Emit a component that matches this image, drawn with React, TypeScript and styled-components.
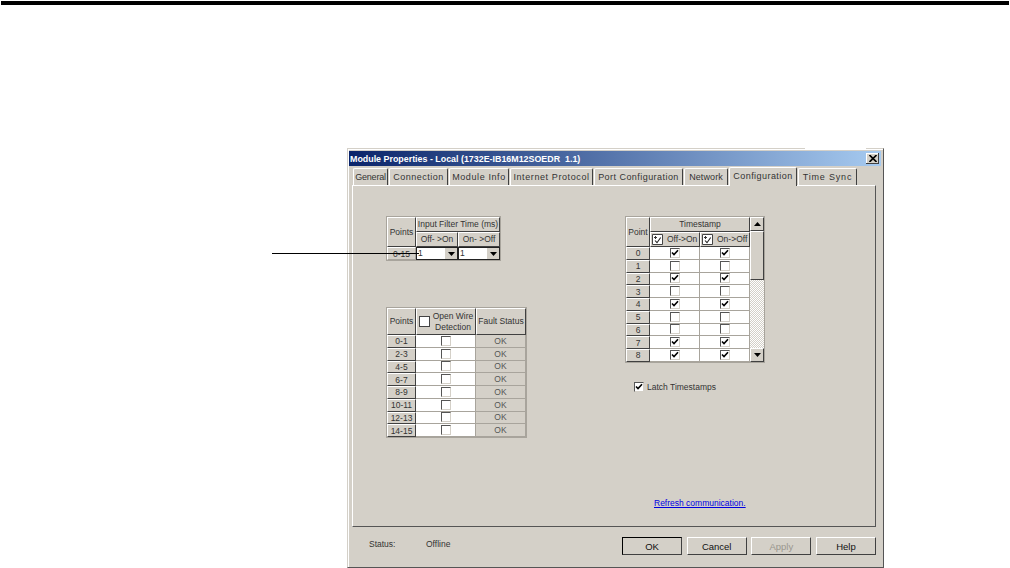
import React from 'react';
import styled, { createGlobalStyle } from 'styled-components';

const GlobalStyle = createGlobalStyle`
  html, body {
    margin: 0;
    padding: 0;
    background: #fff;
  }
  body {
    font-family: "Liberation Sans", Arial, sans-serif;
    overflow: hidden;
  }
`;

const TABS = [
  { label: 'General', width: 35, spacing: -0.2 },
  { label: 'Connection', width: 59, spacing: 0.5 },
  { label: 'Module Info', width: 60, spacing: 0.6 },
  { label: 'Internet Protocol', width: 83, spacing: 0.6 },
  { label: 'Port Configuration', width: 89, spacing: 0.45 },
  { label: 'Network', width: 44, spacing: 0.1 },
  { label: 'Configuration', width: 68, spacing: 0.45 },
  { label: 'Time Sync', width: 59, spacing: 0.8 },
];

const WIRE_POINTS = ['0-1', '2-3', '4-5', '6-7', '8-9', '10-11', '12-13', '14-15'];

const STAMP_ROWS = [
  { point: '0', on: true },
  { point: '1', on: false },
  { point: '2', on: true },
  { point: '3', on: false },
  { point: '4', on: true },
  { point: '5', on: false },
  { point: '6', on: false },
  { point: '7', on: true },
  { point: '8', on: true },
];

const CheckBox = ({ checked = false }: { checked?: boolean }) => (
  <Box>
    {checked && (
      <svg width="8" height="8" viewBox="0 0 8 8">
        <path d="M1 3.5 L3 5.6 L7 1.2" fill="none" stroke="#000" strokeWidth="1.6" />
      </svg>
    )}
  </Box>
);

const HeaderCheck = () => (
  <HeaderIcon width="11" height="11" viewBox="0 0 11 11">
    <path d="M0.5 10.5 V0.5 H10.5 V10.5 Z" fill="#fff" stroke="#444" />
    <path d="M2 3.5 H5 M3.5 2 V5" stroke="#333" />
    <path d="M3 6.5 L5 8.7 L8.7 3.5" fill="none" stroke="#222" strokeWidth="1.1" />
  </HeaderIcon>
);

const Arrow = ({ dir }: { dir: 'up' | 'down' }) => (
  <svg width="7" height="4" viewBox="0 0 7 4">
    <path d={dir === 'up' ? 'M3.5 0 L7 4 H0 Z' : 'M0 0 H7 L3.5 4 Z'} fill="#000" />
  </svg>
);

const Combo = () => (
  <ComboCell>
    <ComboValue>1</ComboValue>
    <ComboButton>
      <Arrow dir="down" />
    </ComboButton>
  </ComboCell>
);

export default function App() {
  return (
    <Page>
      <GlobalStyle />
      <TopRule />
      <Leader />
      <Dialog>
        <BorderGap />
        <TitleBar>
          <TitleText>Module Properties - Local (1732E-IB16M12SOEDR&nbsp;&nbsp;1.1)</TitleText>
          <CloseButton>
            <svg width="8" height="7" viewBox="0 0 8 7">
              <path d="M0.5 0 L7.5 7 M7.5 0 L0.5 7" stroke="#000" strokeWidth="1.6" />
            </svg>
          </CloseButton>
        </TitleBar>

        <TabStrip>
          {TABS.map((t) => (
            <Tab key={t.label} $width={t.width} $spacing={t.spacing} $active={t.label === 'Configuration'}>
              {t.label}
            </Tab>
          ))}
        </TabStrip>

        <Panel>
          <LeftColumn>
            <FilterGrid>
              <HeadCell $rows={2}>Points</HeadCell>
              <HeadCell $cols={2}>Input Filter Time (ms)</HeadCell>
              <HeadCell>Off- &gt;On</HeadCell>
              <HeadCell>On- &gt;Off</HeadCell>
              <RowHead $flat>0-15</RowHead>
              <Combo />
              <Combo />
            </FilterGrid>

            <WireGrid>
              <HeadCell>Points</HeadCell>
              <HeadCell>
                <HeadBox />
                <WireLabel>
                  Open Wire
                  <br />
                  Detection
                </WireLabel>
              </HeadCell>
              <HeadCell>Fault Status</HeadCell>
              {WIRE_POINTS.map((p) => (
                <React.Fragment key={p}>
                  <RowHead>{p}</RowHead>
                  <DataCell>
                    <CheckBox />
                  </DataCell>
                  <StatusCell>OK</StatusCell>
                </React.Fragment>
              ))}
            </WireGrid>
          </LeftColumn>

          <RightColumn>
            <StampGrid>
              <HeadCell $rows={2}>Point</HeadCell>
              <HeadCell $cols={2}>Timestamp</HeadCell>
              <ScrollBar>
                <ScrollButton>
                  <Arrow dir="up" />
                </ScrollButton>
                <ScrollThumb />
                <ScrollTrack />
                <ScrollButton>
                  <Arrow dir="down" />
                </ScrollButton>
              </ScrollBar>
              <SubHead>
                <HeaderCheck />
                <span>Off-&gt;On</span>
              </SubHead>
              <SubHead>
                <HeaderCheck />
                <span>On-&gt;Off</span>
              </SubHead>
              {STAMP_ROWS.map((r) => (
                <React.Fragment key={r.point}>
                  <RowHead>{r.point}</RowHead>
                  <DataCell>
                    <CheckBox checked={r.on} />
                  </DataCell>
                  <DataCell>
                    <CheckBox checked={r.on} />
                  </DataCell>
                </React.Fragment>
              ))}
            </StampGrid>

            <LatchRow>
              <CheckBox checked />
              <span>Latch Timestamps</span>
            </LatchRow>

            <RefreshLink href="#">Refresh communication.</RefreshLink>
          </RightColumn>
        </Panel>

        <Footer>
          <StatusLabel>Status:</StatusLabel>
          <StatusValue>Offline</StatusValue>
          <ButtonRow>
            <DialogButton $default>OK</DialogButton>
            <DialogButton>Cancel</DialogButton>
            <DialogButton $disabled>Apply</DialogButton>
            <DialogButton>Help</DialogButton>
          </ButtonRow>
        </Footer>
      </Dialog>
    </Page>
  );
}

const Page = styled.div`
  position: relative;
  width: 1010px;
  height: 568px;
  background: #fff;
  padding: 1px 1px 0;
  box-sizing: border-box;
`;

const TopRule = styled.div`
  height: 4px;
  background: #000;
`;

const Leader = styled.div`
  position: absolute;
  left: 272px;
  top: 253px;
  width: 147px;
  height: 1px;
  background: #000;
  z-index: 2;
`;

const Dialog = styled.div`
  position: relative;
  box-sizing: border-box;
  width: 537px;
  height: 420px;
  margin: 143px 0 0 346px;
  background: #d4d0c8;
  border: 1px solid #d4d0c8;
  border-right-color: #555;
  border-bottom-color: #555;
  box-shadow: inset 1px 1px 0 #fff;
  padding: 2px 2px 0 1px;
  color: #333;
  font-size: 8.5px;
`;

const BorderGap = styled.div`
  position: absolute;
  top: -1px;
  left: 457px;
  width: 61px;
  height: 1px;
  background: #fff;
`;

const TitleBar = styled.div`
  display: flex;
  align-items: center;
  justify-content: space-between;
  height: 15px;
  padding: 0 2px 0 1px;
  background: linear-gradient(90deg, #0a246a, #a6caf0);
`;

const TitleText = styled.div`
  color: #fff;
  font-weight: bold;
  font-size: 8.9px;
  white-space: nowrap;
`;

const CloseButton = styled.div`
  display: flex;
  align-items: center;
  justify-content: center;
  width: 13px;
  height: 11px;
  background: #d4d0c8;
  box-shadow: inset -1px -1px 0 #404040, inset 1px 1px 0 #fff;
`;

const TabStrip = styled.div`
  display: flex;
  align-items: flex-end;
  gap: 1px;
  height: 19px;
  padding-left: 4px;
`;

const Tab = styled.div<{ $width: number; $spacing: number; $active?: boolean }>`
  box-sizing: border-box;
  width: ${(p) => p.$width}px;
  height: ${(p) => (p.$active ? 19 : 17)}px;
  margin-bottom: ${(p) => (p.$active ? -1 : 0)}px;
  padding-bottom: ${(p) => (p.$active ? 3 : 0)}px;
  position: relative;
  z-index: ${(p) => (p.$active ? 1 : 0)};
  display: flex;
  align-items: center;
  justify-content: center;
  white-space: nowrap;
  font-size: 9px;
  letter-spacing: ${(p) => p.$spacing}px;
  background: #d4d0c8;
  border-top: 1px solid #fff;
  border-left: 1px solid #fff;
  border-right: 1px solid #404040;
  border-radius: 2px 2px 0 0;
`;

const Panel = styled.div`
  box-sizing: border-box;
  display: flex;
  width: 524px;
  height: 342px;
  margin-left: 3px;
  padding: 30px 0 0 33px;
  border: 1px solid #fff;
  border-right-color: #555;
  border-bottom-color: #555;
`;

const LeftColumn = styled.div`
  display: flex;
  flex-direction: column;
  align-items: flex-start;
  gap: 46px;
  width: 239px;
`;

const RightColumn = styled.div`
  display: flex;
  flex-direction: column;
  align-items: flex-start;
`;

const TableGrid = styled.div`
  display: grid;
  box-sizing: content-box;
  border: 1px solid #a8a49c;
  background: #a8a49c;
  text-align: center;
`;

const FilterGrid = styled(TableGrid)`
  grid-template-columns: 29px 42px 42px;
  grid-template-rows: 15px 15px 13px;
`;

const WireGrid = styled(TableGrid)`
  grid-template-columns: 29px 60px 50px;
  grid-template-rows: 27px repeat(8, 12.75px);
`;

const StampGrid = styled(TableGrid)`
  grid-template-columns: 24px 50px 50px 14px;
  grid-template-rows: 15px 15px repeat(9, 12.75px);
`;

const HeadCell = styled.div<{ $rows?: number; $cols?: number }>`
  box-sizing: border-box;
  grid-row: span ${(p) => p.$rows ?? 1};
  grid-column: span ${(p) => p.$cols ?? 1};
  display: flex;
  align-items: center;
  justify-content: center;
  gap: 3px;
  background: #d4d0c8;
  white-space: nowrap;
  line-height: 11px;
  border-top: 1px solid #fff;
  border-left: 1px solid #fff;
  border-right: 1px solid #404040;
  border-bottom: 1px solid #404040;
`;

const SubHead = styled(HeadCell)`
  justify-content: flex-start;
  gap: 4px;
  padding-left: 1px;
`;

const HeaderIcon = styled.svg`
  flex: none;
`;

const HeadBox = styled.div`
  box-sizing: border-box;
  flex: none;
  width: 11px;
  height: 11px;
  background: #fff;
  border: 1px solid #444;
`;

const WireLabel = styled.div`
  text-align: center;
`;

const RowHead = styled.div<{ $flat?: boolean }>`
  box-sizing: border-box;
  display: flex;
  align-items: center;
  justify-content: center;
  background: #d4d0c8;
  border-top: 1px solid #fff;
  border-left: 1px solid #fff;
  border-right: 1px solid ${(p) => (p.$flat ? '#a8a49c' : '#404040')};
  border-bottom: 1px solid ${(p) => (p.$flat ? '#a8a49c' : '#404040')};
`;

const DataCell = styled.div`
  box-sizing: border-box;
  display: flex;
  align-items: center;
  justify-content: center;
  background: #fff;
  border-right: 1px solid #a8a49c;
  border-bottom: 1px solid #a8a49c;
`;

const StatusCell = styled(DataCell)`
  background: #d4d0c8;
  color: #555;
`;

const Box = styled.div`
  box-sizing: border-box;
  flex: none;
  display: flex;
  align-items: center;
  justify-content: center;
  width: 10px;
  height: 10px;
  background: #fff;
  border-top: 1px solid #555;
  border-left: 1px solid #555;
  border-right: 1px solid #d4d0c8;
  border-bottom: 1px solid #d4d0c8;
`;

const ComboCell = styled.div`
  box-sizing: border-box;
  display: flex;
  align-items: stretch;
  background: #fff;
  border: 1px solid #222;
`;

const ComboValue = styled.div`
  flex: 1;
  padding-left: 1px;
  text-align: left;
  line-height: 11px;
`;

const ComboButton = styled.div`
  display: flex;
  align-items: center;
  justify-content: center;
  width: 12px;
  background: #d4d0c8;
`;

const ScrollBar = styled.div`
  grid-column: 4;
  grid-row: 1 / -1;
  display: flex;
  flex-direction: column;
  background: #fff;
`;

const ScrollButton = styled.div`
  box-sizing: border-box;
  flex: none;
  display: flex;
  align-items: center;
  justify-content: center;
  height: 14px;
  background: #d4d0c8;
  border-top: 1px solid #fff;
  border-left: 1px solid #fff;
  border-right: 1px solid #404040;
  border-bottom: 1px solid #404040;
`;

const ScrollThumb = styled(ScrollButton)`
  height: 49px;
`;

const ScrollTrack = styled.div`
  flex: 1;
  background-color: #fff;
  background-image: repeating-conic-gradient(#d4d0c8 0 25%, #fff 0 50%);
  background-size: 2px 2px;
`;

const LatchRow = styled.div`
  display: flex;
  align-items: center;
  gap: 3px;
  margin: 19px 0 0 9px;
  line-height: 11px;
`;

const RefreshLink = styled.a`
  margin: 105px 0 0 29px;
  color: #0000e0;
  text-decoration: underline;
  line-height: 11px;
`;

const Footer = styled.div`
  display: flex;
  align-items: center;
  height: 38px;
  padding-left: 20px;
`;

const StatusLabel = styled.div`
  width: 57px;
  margin-bottom: 4px;
`;

const StatusValue = styled.div`
  flex: 1;
  margin-bottom: 4px;
`;

const ButtonRow = styled.div`
  display: flex;
  gap: 4.67px;
  padding-right: 5px;
`;

const DialogButton = styled.div<{ $default?: boolean; $disabled?: boolean }>`
  box-sizing: border-box;
  display: flex;
  align-items: center;
  justify-content: center;
  width: 60px;
  height: 18px;
  font-size: 9.5px;
  background: #d4d0c8;
  color: ${(p) => (p.$disabled ? '#9a968e' : '#111')};
  border: 1px solid ${(p) => (p.$default ? '#000' : '#fff')};
  border-right-color: #404040;
  border-bottom-color: #404040;
`;
